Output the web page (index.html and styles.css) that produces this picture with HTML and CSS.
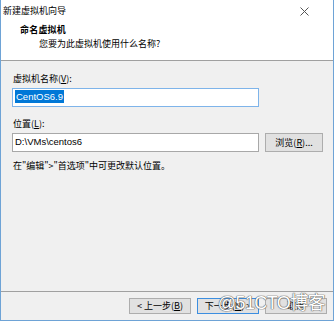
FILE: index.html
```html
<!DOCTYPE html>
<html lang="zh-CN">
<head>
    <meta charset="UTF-8">
    <title>新建虚拟机向导</title>
    <link rel="stylesheet" href="styles.css">
</head>
<body>
    <div class="window">
        <div class="titlebar">
            <span class="title">新建虚拟机向导</span>
            <svg class="close" width="9" height="9" viewBox="0 0 9 9">
                <path d="M0.5 0.5 L8.5 8.5 M8.5 0.5 L0.5 8.5" stroke="#555" stroke-width="1"/>
            </svg>
        </div>

        <!-- wizard header -->
        <div class="header">
            <div class="header-title">命名虚拟机</div>
            <div class="header-sub">您要为此虚拟机使用什么名称?</div>
        </div>

        <div class="content">
            <label class="field-label">虚拟机名称(<u>V</u>):</label>
            <div class="textbox focused">
                <span class="selected">CentOS6.9</span>
            </div>

            <label class="field-label second">位置(<u>L</u>):</label>
            <div class="row">
                <div class="textbox">D:\VMs\centos6</div>
                <button class="btn browse">浏览(<u>R</u>)...</button>
            </div>

            <p class="hint">在"编辑"&gt;"首选项"中可更改默认位置。</p>
        </div>

        <div class="footer">
            <button class="btn nav">&lt; 上一步(<u>B</u>)</button>
            <button class="btn nav default">下一步(<u>N</u>) &gt;</button>
            <button class="btn nav">取消</button>
        </div>

        <div class="watermark">@51CTO博客</div>
    </div>
</body>
</html>
```

FILE: styles.css
```css
* {
    margin: 0;
    padding: 0;
    box-sizing: border-box;
}

body {
    font-family: "Noto Sans CJK SC", "Liberation Sans", sans-serif;
    font-size: 9px;
    color: #000;
    background: #fff;
}

.window {
    position: relative;
    width: 334px;
    height: 321px;
    border: 1px solid #6ea3d6;
    border-top: none;
    display: flex;
    flex-direction: column;
    background: #f0f0f0;
    overflow: hidden;
}

.titlebar {
    height: 22px;
    background: #fff;
    display: flex;
    align-items: center;
    justify-content: space-between;
    padding: 0 24px 0 2px;
    line-height: 12px;
}

.close {
    display: block;
}

.header {
    height: 39px;
    background: #fff;
    border-bottom: 1px solid #a0a0a0;
    padding: 2px 0 0 19px;
}

.header-title {
    font-weight: bold;
    line-height: 12px;
    letter-spacing: 0.2px;
}

.header-sub {
    line-height: 12px;
    padding: 2px 0 0 19px;
}

.content {
    flex: 1;
    padding: 12px 0 0 11px;
}

.field-label {
    display: block;
    line-height: 12px;
    padding-left: 1px;
    margin-bottom: 3px;
}

.field-label.second {
    margin-top: 11px;
}

.row {
    display: flex;
    gap: 6px;
}

.textbox {
    width: 247px;
    height: 19px;
    background: #fff;
    border: 1px solid #a8a8a8;
    padding-left: 2px;
    line-height: 16px;
    font-family: "Liberation Sans", "Noto Sans CJK SC", sans-serif;
    font-size: 9.5px;
}

.textbox.focused {
    border-color: #7eb4ea;
}

.selected {
    background: #0078d7;
    color: #fff;
    padding: 1px 1px;
}

.btn {
    font-family: "Noto Sans CJK SC", "Liberation Sans", sans-serif;
    font-size: 9px;
    line-height: 12px;
    background: #e1e1e1;
    border: 1px solid #adadad;
    color: #000;
}

.browse {
    width: 58px;
    height: 19px;
}

.hint {
    margin-top: 8px;
    line-height: 12px;
    padding-left: 1px;
}

.footer {
    height: 29px;
    border-top: 1px solid #a0a0a0;
    display: flex;
    justify-content: flex-end;
    gap: 6px;
    padding: 6px 6px 0 0;
}

.nav {
    width: 62px;
    height: 16px;
}

.nav.default {
    border-color: #3c8ee0;
}

/* watermark sits on top of the buttons */
.watermark {
    position: absolute;
    right: 8px;
    bottom: 6px;
    font-family: "Liberation Sans", "Noto Sans CJK SC", sans-serif;
    font-size: 18px;
    line-height: 22px;
    letter-spacing: -0.6px;
    color: #fff;
    text-shadow: 0 0 1px #555, 0 0 1px #555, 0 0 1px #777;
}
```
